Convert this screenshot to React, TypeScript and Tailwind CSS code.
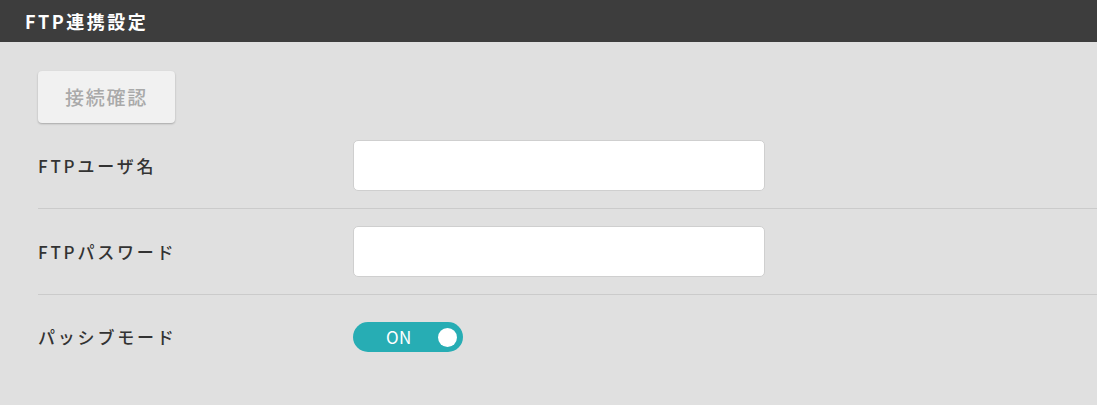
const font = { fontFamily: '"Noto Sans CJK JP", "Noto Sans", sans-serif' }

function Row({ label, children }: { label: string; children: React.ReactNode }) {
  return (
    <div className="flex items-center border-b border-[#cbcbcb] py-[17px]">
      <div className="w-[315px] shrink-0 text-[17px] font-medium tracking-[2.8px] text-[#333333]">
        {label}
      </div>
      {children}
    </div>
  )
}

export default function App() {
  return (
    <div className="min-h-[405px] w-full bg-[#e0e0e0]" style={font}>
      <div className="flex h-[42px] items-center bg-[#3d3d3d] px-[25px]">
        <h1 className="text-[18px] font-bold tracking-[2.5px] text-white">
          FTP連携設定
        </h1>
      </div>
      <div className="pl-[38px] pt-[29px]">
        <button className="h-[52px] w-[137px] rounded-[4px] bg-[#f1f1f1] text-[19px] font-medium tracking-[1.8px] text-[#a9a9a9] shadow-[0_1px_2px_rgba(0,0,0,0.25)]">
          接続確認
        </button>
        <Row label="FTPユーザ名">
          <input className="h-[51px] w-[412px] rounded-[5px] border border-[#cfcfcf] bg-white px-3 outline-none" />
        </Row>
        <Row label="FTPパスワード">
          <input
            type="password"
            className="h-[51px] w-[412px] rounded-[5px] border border-[#cfcfcf] bg-white px-3 outline-none"
          />
        </Row>
        <div className="flex items-center py-[27px]">
          <div className="w-[315px] shrink-0 text-[17px] font-medium tracking-[2.8px] text-[#333333]">
            パッシブモード
          </div>
          <button className="flex h-[30px] w-[110px] items-center justify-between rounded-full bg-[#27adb4] pl-[33px] pr-[6px]">
            <span className="text-[17px] font-normal tracking-[0.5px] text-white">ON</span>
            <span className="size-[19px] rounded-full bg-white" />
          </button>
        </div>
      </div>
    </div>
  )
}
